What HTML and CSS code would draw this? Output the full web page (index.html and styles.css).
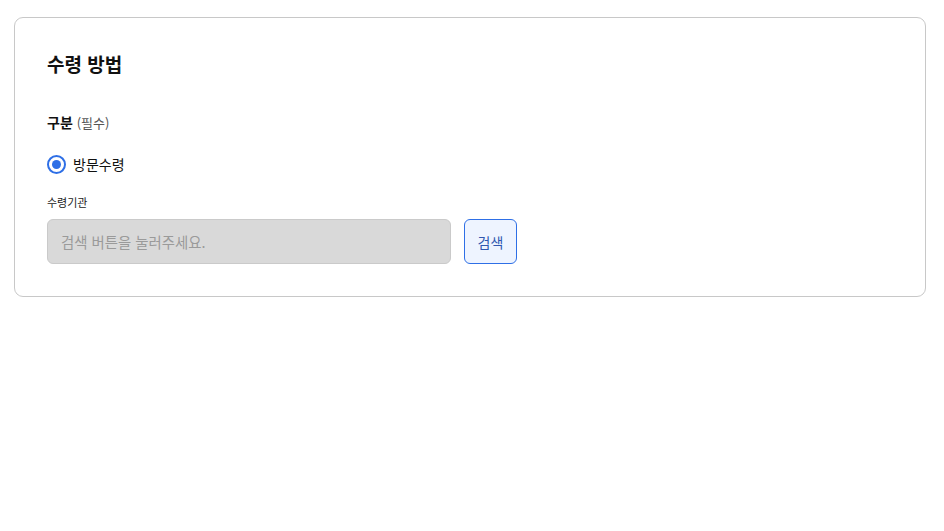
FILE: index.html
```html
<!DOCTYPE html>
<html lang="ko">
<head>
<meta charset="utf-8">
<link rel="stylesheet" href="styles.css">
</head>
<body>
<div class="page">
  <section class="card">
    <h2 class="title">수령 방법</h2>
    <div class="label">구분 <span class="req">(필수)</span></div>
    <label class="radio">
      <span class="radio-circle"><span class="radio-dot"></span></span>
      <span class="radio-text">방문수령</span>
    </label>
    <div class="sublabel">수령기관</div>
    <div class="search-row">
      <div class="input">검색 버튼을 눌러주세요.</div>
      <button class="btn">검색</button>
    </div>
  </section>
</div>
</body>
</html>
```
FILE: styles.css
```css
* { box-sizing: border-box; }
html, body { margin: 0; padding: 0; background: #fff; }
body {
  font-family: "Noto Sans CJK KR", "Noto Sans", sans-serif;
  color: #111;
}
.page { padding: 17px 18px 0 14px; }
.card {
  border: 1px solid #c8c8c8;
  border-radius: 9px;
  padding: 28px 32px 31px 32px;
  height: 280px;
}
.title {
  margin: 0;
  font-size: 19px;
  font-weight: 700;
  line-height: 36px;
  color: #111;
}
.label {
  margin-top: 30px;
  font-size: 14px;
  font-weight: 700;
  line-height: 20px;
}
.req { font-size: 13px; font-weight: 400; color: #555; }
.radio {
  display: flex;
  align-items: center;
  gap: 7px;
  margin-top: 20px;
  height: 22px;
}
.radio-circle {
  width: 19px; height: 19px;
  border: 2px solid #2e6fe6;
  border-radius: 50%;
  display: flex; align-items: center; justify-content: center;
}
.radio-dot { width: 9px; height: 9px; border-radius: 50%; background: #2e6fe6; }
.radio-text { font-size: 14px; line-height: 20px; color: #111; }
.sublabel {
  margin-top: 19px;
  font-size: 11px;
  line-height: 16px;
  color: #222;
}
.search-row {
  display: flex;
  gap: 13px;
  margin-top: 9px;
}
.input {
  width: 404px;
  height: 45px;
  background: #d9d9d9;
  border: 1px solid #cacaca;
  border-radius: 6px;
  padding: 0 13px;
  display: flex;
  align-items: center;
  font-size: 14.4px;
  color: #9a9a9a;
}
.btn {
  width: 53px;
  height: 45px;
  border: 1px solid #2e6fe6;
  border-radius: 6px;
  background: #eef4ff;
  color: #3057b0;
  font-family: inherit;
  font-size: 14px;
  padding: 0;
}
```
